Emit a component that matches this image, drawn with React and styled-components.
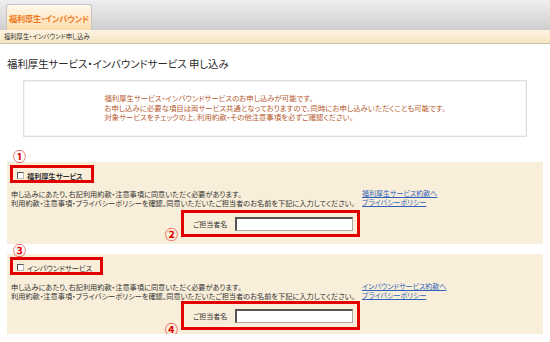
import React from "react";
import styled, { createGlobalStyle } from "styled-components";

const GlobalStyle = createGlobalStyle`
  body {
    margin: 0;
    background: #fff;
    font-family: "Noto Sans CJK JP", "Noto Sans", sans-serif;
    font-feature-settings: "palt";
    color: #333;
  }
`;

const Header = styled.div`
  height: 30px;
  padding-left: 6px;
  display: flex;
  align-items: flex-end;
  background: linear-gradient(#efefef, #cfcfcf);
`;

const Tab = styled.div`
  width: 84px;
  height: 25px;
  display: flex;
  align-items: center;
  justify-content: center;
  border: 1px solid #c4c4c4;
  border-bottom: none;
  border-radius: 3px 3px 0 0;
  background: linear-gradient(#fff9ee, #fddcab);
  color: #ef7b24;
  font-size: 8.2px;
  font-weight: bold;
  white-space: nowrap;
  letter-spacing: -0.2px;
`;

const Breadcrumb = styled.div`
  height: 13px;
  line-height: 13px;
  padding-left: 4px;
  font-size: 6.3px;
  color: #333;
  background: linear-gradient(#fcf4e2, #f7e5c2);
  border-bottom: 1px solid #c8bfae;
`;

const Content = styled.div`
  padding: 0 7px;
`;

const Title = styled.h1`
  margin: 0;
  padding-top: 14px;
  height: 26px;
  box-sizing: border-box;
  font-size: 10.4px;
  line-height: 12px;
  font-weight: normal;
  color: #2a2a2a;
`;

const InfoBox = styled.div`
  margin: 10px 16px 0;
  height: 57px;
  box-sizing: border-box;
  border: 1px solid #dedede;
  box-shadow: inset 0 0 0 1px #f4f4f4;
  display: flex;
  align-items: center;
  justify-content: center;
`;

const InfoText = styled.p`
  margin: 0 0 2px;
  font-size: 7.4px;
  line-height: 9.5px;
  color: #b65a2c;
`;

const Section = styled.section`
  position: relative;
  margin-top: ${(p) => p.$gap}px;
  height: ${(p) => p.$height}px;
  box-sizing: border-box;
  padding: ${(p) => p.$pad}px 0 0 3px;
  background: #f8eed9;
`;

const Marker = styled.span`
  position: absolute;
  top: ${(p) => p.$top}px;
  left: ${(p) => p.$left}px;
  color: #e10000;
  font-size: 13px;
  font-weight: bold;
  line-height: 13px;
`;

const CheckLabel = styled.label`
  display: flex;
  width: fit-content;
  align-items: center;
  gap: 3px;
  padding: 3px 8px 0 4px;
  height: 18px;
  box-sizing: border-box;
  border: 3px solid #e30000;
  font-size: 7.2px;
  font-weight: ${(p) => (p.$bold ? "bold" : "normal")};
  color: #333;
`;

const Box = styled.span`
  width: 5px;
  height: 5px;
  border: 1px solid #555;
  border-right-color: #bbb;
  border-bottom-color: #bbb;
  background: #fff;
`;

const Terms = styled.div`
  display: flex;
  align-items: flex-start;
  height: 18px;
  margin-top: ${(p) => p.$top}px;
`;

const Desc = styled.p`
  margin: 0;
  padding-left: 1px;
  width: 350px;
  font-size: 7.2px;
  line-height: 9px;
  color: #333;
  white-space: nowrap;
`;

const Links = styled.div`
  display: flex;
  flex-direction: column;
  margin-top: -1px;
  padding-left: 1px;
`;

const TermLink = styled.a`
  font-size: 7px;
  line-height: 9px;
  color: #3063b8;
  text-decoration: underline;
`;

const NameRow = styled.div`
  padding-left: 171px;
  margin-top: ${(p) => p.$top}px;
`;

const NameBox = styled.div`
  position: relative;
  width: 179px;
  height: ${(p) => p.$height}px;
  box-sizing: border-box;
  border: 3px solid #e30000;
  display: flex;
  align-items: center;
  padding-left: 9px;
  gap: 8px;
  font-size: 7px;
  color: #333;
`;

const NameInput = styled.input`
  width: 118px;
  height: 14px;
  box-sizing: border-box;
  border: 1px solid #aaa;
  border-top: 2px solid #555;
  border-left: 2px solid #555;
  background: #fff;
  padding: 0;
`;

const Service = ({ num, nameNum, label, bold, link, gap, height, pad, markerTop, descTop, nameTop, boxHeight, nameNumTop }) => (
  <Section $gap={gap} $height={height} $pad={pad}>
    <Marker $top={markerTop} $left={6}>{num}</Marker>
    <CheckLabel $bold={bold}>
      <Box />
      {label}
    </CheckLabel>
    <Terms $top={descTop}>
      <Desc>
        申し込みにあたり、右記利用約款・注意事項に同意いただく必要があります。
        <br />
        利用約款・注意事項・プライバシーポリシーを確認、同意いただいたご担当者のお名前を下記に入力してください。
      </Desc>
      <Links>
        <TermLink href="#">{link}</TermLink>
        <TermLink href="#">プライバシーポリシー</TermLink>
      </Links>
    </Terms>
    <NameRow $top={nameTop}>
      <NameBox $height={boxHeight}>
        <Marker $top={nameNumTop} $left={-19}>{nameNum}</Marker>
        ご担当者名
        <NameInput type="text" />
      </NameBox>
    </NameRow>
  </Section>
);

export default function App() {
  return (
    <>
      <GlobalStyle />
      <Header>
        <Tab>福利厚生・インバウンド</Tab>
      </Header>
      <Breadcrumb>福利厚生・インバウンド申し込み</Breadcrumb>
      <Content>
        <Title>福利厚生サービス・インバウンドサービス 申し込み</Title>
        <InfoBox>
          <InfoText>
            福利厚生サービス・インバウンドサービスのお申し込みが可能です。
            <br />
            お申し込みに必要な項目は両サービス共通となっておりますので、同時にお申し込みいただくことも可能です。
            <br />
            対象サービスをチェックの上、利用約款・その他注意事項を必ずご確認ください。
          </InfoText>
        </InfoBox>
        <Service
          num="①"
          nameNum="②"
          label="福利厚生サービス"
          bold
          link="福利厚生サービス約款へ"
          gap={25}
          height={82}
          pad={3}
          markerTop={-13}
          descTop={7}
          nameTop={2}
          boxHeight={27}
          nameNumTop={14}
        />
        <Service
          num="③"
          nameNum="④"
          label="インバウンドサービス"
          link="インバウンドサービス約款へ"
          gap={10}
          height={80}
          pad={3}
          markerTop={-11}
          descTop={8}
          nameTop={0}
          boxHeight={29}
          nameNumTop={18}
        />
      </Content>
    </>
  );
}
